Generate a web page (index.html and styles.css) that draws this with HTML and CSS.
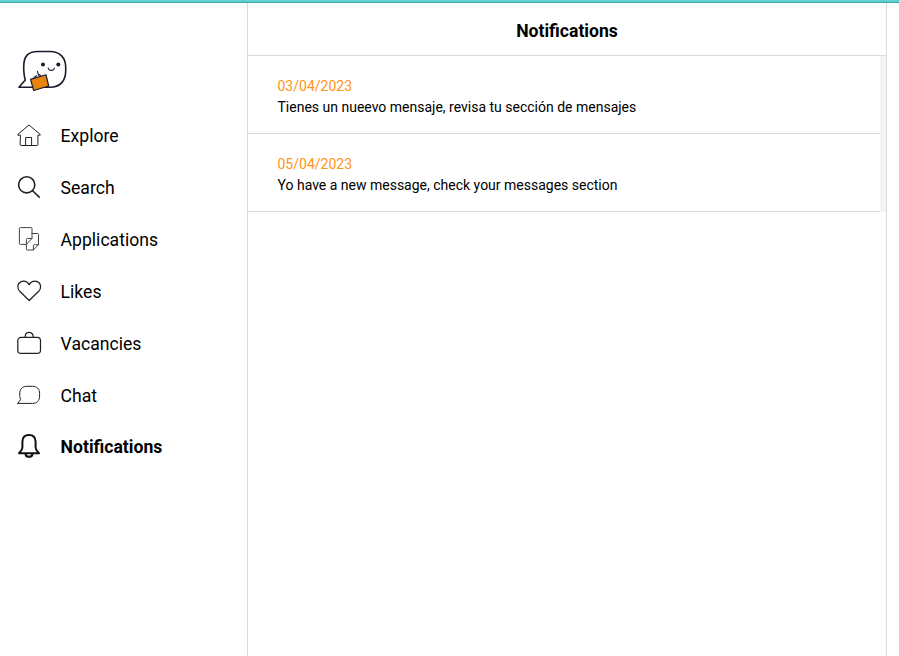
FILE: index.html
```html
<!DOCTYPE html>
<html lang="en">
<head>
<meta charset="utf-8">
<title>Notifications</title>
<link rel="stylesheet" href="styles.css">
</head>
<body>
<div class="topbar"></div>
<div class="layout">
  <aside class="sidebar">
    <svg class="logo" viewBox="0 0 50 42">
      <path class="bubble" d="M.9 37.3 7.3 30C6 26 5.7 23 5.7 17C5.7 6 10 1.5 20 1.5H32C42 1.5 47.7 8 47.7 17V21C47.7 31 42 37.3 32 37.3Z"/>
      <circle cx="25" cy="14.4" r="2"/><circle cx="40.3" cy="14.4" r="2"/>
      <path class="smile" d="M30.2 18C30.8 21.2 35.8 21.2 36.4 18"/>
      <path class="hand" d="M16 27.5 18.6 25.7M19.4 21.3 20.7 25.5M21.5 24.6 22.7 26"/>
      <path class="case" d="M12.5 29.4 28 24.7 30.7 36 15.7 40.5Z"/>
    </svg>
    <nav class="menu">
      <a class="item"><svg class="icon thin" viewBox="0 0 24 24"><path d="M3.1 11.2H.8V10.4L12 1 23.2 10.4V11.2H20.9V20.5Q20.9 21.5 19.9 21.5H4.1Q3.1 21.5 3.1 20.5ZM8.6 21.5V13.5H14.6V21.5"/></svg><span>Explore</span></a>
      <a class="item"><svg class="icon search" viewBox="0 0 24 24"><circle cx="9.7" cy="8.8" r="8.1"/><path d="M15.6 14.7 22.2 21.1"/></svg><span>Search</span></a>
      <a class="item"><svg class="icon pages" viewBox="0 0 24 24"><path d="M15 10.5V.5Q15-.4 14.1-.4H3.3Q2.4-.4 2.4.5V15.5Q2.4 16.4 3.3 16.4H9.4L15 10.5H10.3Q9.4 10.5 9.4 11.4V21.1Q9.4 22 10.3 22H16.4L21.5 16.7V6.4Q21.5 5.5 20.6 5.5H15M16.4 22V17.6Q16.4 16.7 17.3 16.7H21.5"/></svg><span>Applications</span></a>
      <a class="item"><svg class="icon" viewBox="0 0 24 24"><path d="M12.2 20.5 2.7 11.3C-.3 8 .4 3.4 3.6 1.9C6.8.3 10.3 1.4 12.2 4.6C14.1 1.4 17.6.3 20.8 1.9C24 3.4 24.7 8 21.7 11.3Z"/></svg><span>Likes</span></a>
      <a class="item"><svg class="icon" viewBox="0 0 24 24"><rect x=".8" y="5.4" width="22.7" height="16" rx="3.2"/><path d="M8.2 5.2V4.6C8.2-.9 16.2-.9 16.2 4.6V5.2"/></svg><span>Vacancies</span></a>
      <a class="item"><svg class="icon thin" viewBox="0 0 24 24"><path d="M.8 19.3 3.6 15.6C2.8 13.5 2.7 12 2.7 10C2.7 4.8 5.5 2.3 10 2.3H15.3C20 2.3 22.6 5 22.6 9.5V12C22.6 16.8 20 19.4 15.3 19.4H.8Z"/></svg><span>Chat</span></a>
      <a class="item active"><svg class="icon bell" viewBox="0 0 24 24"><path d="M5.4 7C5.4 2.5 8 .1 12 .1S18.6 2.5 18.6 7V12.5C18.6 15 20.5 16.6 22 18.3H2C3.5 16.6 5.4 15 5.4 12.5ZM8.5 19C9 22.8 15 22.8 15.5 19"/></svg><span>Notifications</span></a>
    </nav>
  </aside>
  <main class="content">
    <h1 class="title">Notifications</h1>
    <section class="list">
      <article class="notice"><time>03/04/2023</time><p>Tienes un nueevo mensaje, revisa tu sección de mensajes</p></article>
      <article class="notice"><time>05/04/2023</time><p>Yo have a new message, check your messages section</p></article>
    </section>
  </main>
</div>
</body>
</html>
```
FILE: styles.css
```css
* { box-sizing: border-box; }
body {
  margin: 0;
  height: 100vh;
  overflow: hidden;
  display: flex;
  flex-direction: column;
  background: #fff;
  color: #000;
  font-family: Roboto, sans-serif;
}
.topbar { height: 3px; flex: none; background: #5fcfcf; border-bottom: 1px solid #43a3a3; }
.layout { flex: 1; display: flex; }
.sidebar { width: 248px; padding: 47px 17px 0; border-right: 1px solid #dbdbdb; }
.logo { display: block; width: 50px; height: 42px; margin-left: 1px; fill: #1b1b2f; }
.bubble { fill: #fff; stroke: #1b1b2f; stroke-width: 1.6; stroke-linejoin: round; }
.smile, .hand { fill: none; stroke: #1b1b2f; stroke-width: 1.1; stroke-linecap: round; }
.case { fill: #e8830c; stroke: #1b1b2f; stroke-width: 1.2; stroke-linejoin: round; }
.menu { padding-top: 18px; }
.item { display: flex; align-items: center; gap: 19.6px; height: 52px; font-size: 17.6px; line-height: 22px; }
.item.active { height: 50px; font-weight: 700; }
.icon {
  width: 24px;
  height: 24px;
  flex: none;
  overflow: visible;
  fill: none;
  stroke: #222;
  stroke-width: 1.25;
  stroke-linecap: round;
  stroke-linejoin: round;
}
.thin { stroke-width: 1; }
.pages { stroke: #444; stroke-width: 1; }
.search { stroke-width: 1.6; }
.bell { stroke: #111; stroke-width: 2; }
.content { width: 639px; border-right: 1px solid #dbdbdb; }
.title {
  margin: 0;
  height: 53px;
  padding-top: 2px;
  border-bottom: 1px solid #dbdbdb;
  font-size: 17.6px;
  line-height: 52px;
  font-weight: 700;
  text-align: center;
}
.list { border-right: 6px solid #f3f3f3; }
.notice { height: 78px; padding: 20px 29.5px 0; border-bottom: 1px solid #dbdbdb; font-size: 14px; line-height: 21px; }
.notice time { display: block; color: #ff9517; }
.notice p { margin: 0; }
```
